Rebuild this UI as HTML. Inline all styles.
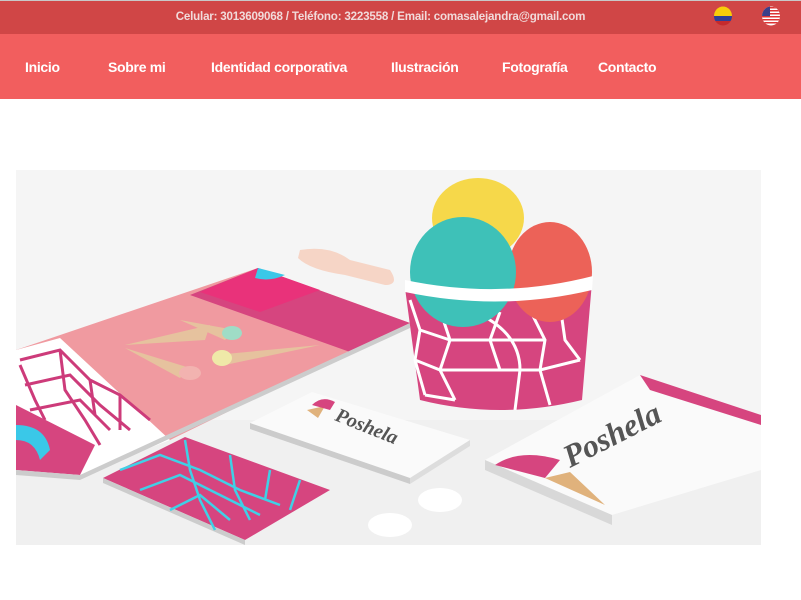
<!DOCTYPE html>
<html><head><meta charset="utf-8"><style>
*{margin:0;padding:0;box-sizing:border-box}
body{width:801px;height:600px;background:#fff;position:relative;overflow:hidden;font-family:"Liberation Sans",sans-serif;font-weight:bold;color:#fff}
.top{position:absolute;left:0;top:0;width:801px;height:34px;background:#d04646;border-top:1px solid #c8c8c8}
.top .t{position:absolute;left:164px;top:9px;width:433px;text-align:center;font-size:11.6px;letter-spacing:-0.2px;color:#f1dada;white-space:nowrap}
.nav{position:absolute;left:0;top:34px;width:801px;height:65px;background:#f25e5e}
.nav span{position:absolute;top:25px;font-size:14px;letter-spacing:-0.3px;white-space:nowrap}
</style></head><body>
<div class="top"><div class="t">Celular: 3013609068 / Teléfono: 3223558 / Email: comasalejandra@gmail.com</div>
<svg style="position:absolute;left:713px;top:5px" width="20" height="20" viewBox="0 0 20 20"><clipPath id="c1"><ellipse cx="10" cy="10" rx="9" ry="9.5"/></clipPath><g clip-path="url(#c1)"><rect width="20" height="10" fill="#f7cd0a"/><rect y="10" width="20" height="5" fill="#2f3f96"/><rect y="15" width="20" height="5" fill="#c52a2d"/></g></svg>
<svg style="position:absolute;left:761px;top:5px" width="20" height="20" viewBox="0 0 20 20"><clipPath id="c2"><ellipse cx="10" cy="10" rx="9" ry="9.5"/></clipPath><g clip-path="url(#c2)"><rect width="20" height="20" fill="#fff"/><g fill="#d33"><rect y="1" width="20" height="1.5"/><rect y="4" width="20" height="1.5"/><rect y="7" width="20" height="1.5"/><rect y="10" width="20" height="1.5"/><rect y="13" width="20" height="1.5"/><rect y="16" width="20" height="1.5"/></g><rect width="9" height="10" fill="#3b3f8a"/></g></svg>
</div>
<div class="nav">
<span style="left:25px">Inicio</span><span style="left:108px">Sobre mi</span><span style="left:211px">Identidad corporativa</span><span style="left:391px">Ilustración</span><span style="left:502px">Fotografía</span><span style="left:598px">Contacto</span>
</div>
<svg style="position:absolute;left:0;top:0" width="801" height="600" viewBox="0 0 801 600">
<defs><clipPath id="img"><rect x="16" y="170" width="745" height="375"/></clipPath></defs>
<g clip-path="url(#img)">
<rect x="16" y="170" width="745" height="375" fill="#f5f5f5"/>
<rect x="16" y="420" width="745" height="125" fill="#f0f0f0"/>
<path d="M300 250 Q330 245 350 260 L390 270 Q400 285 385 285 L345 275 Q310 270 298 258Z" fill="#f6d5c6"/>
<polygon points="16,350 258,268 410,323 170,440 16,470" fill="#f09aa0"/>
<polygon points="190,295 258,268 410,323 350,352" fill="#d6457f"/>
<polygon points="200,292 258,268 320,290 260,312" fill="#e9327a"/>
<path d="M258 268 L285 275 Q270 282 255 278Z" fill="#3ac8e8"/>
<polygon points="16,350 60,338 170,440 80,475 16,470" fill="#fff"/>
<g stroke="#cd3b7a" stroke-width="3" fill="none"><path d="M20 360 L60 350 L90 380 L120 395 L150 420 M25 385 L70 375 L100 405 L130 430 M30 410 L80 400 L110 430 M20 365 L35 400 L45 420 M60 350 L65 390 L85 420 L100 445 M90 380 L95 415 M120 395 L120 430"/></g>
<polygon points="16,405 95,445 80,475 16,470" fill="#d6457f"/>
<path d="M16 425 Q45 425 50 450 L40 460 Q35 440 16 440Z" fill="#3ac8e8"/>
<polygon points="16,470 80,475 410,323 410,328 80,480 16,475" fill="#ccc"/>
<path d="M125 345 L210 325 L205 340Z" fill="#e6c29e"/><path d="M180 320 L235 330 L225 340Z" fill="#e6c29e"/><ellipse cx="232" cy="333" rx="10" ry="7" fill="#9fdcc6"/>
<path d="M125 348 L190 368 L180 378Z" fill="#e6c29e"/><ellipse cx="190" cy="373" rx="11" ry="7" fill="#f2b3b0"/>
<path d="M215 355 L320 345 L225 365Z" fill="#e6c29e"/><ellipse cx="222" cy="358" rx="10" ry="8" fill="#efe9a8"/>
<polygon points="103,478 185,437 330,490 245,540" fill="#d6457f"/>
<polygon points="103,478 245,540 245,545 103,483" fill="#ccc"/>
<g stroke="#3fd0e6" stroke-width="2.5" fill="none"><path d="M120 470 L160 455 L200 470 L240 490 L280 505 M140 490 L180 475 L220 495 L260 515 M170 510 L200 495 L230 520 M185 440 L190 470 L200 500 L215 530 M230 455 L235 490 L250 520 M270 470 L265 500 M300 480 L290 510"/></g>
<polygon points="250,423 312,392 470,440 410,478" fill="#fafafa"/>
<polygon points="250,423 410,478 410,484 250,429" fill="#ccc"/><polygon points="410,478 470,440 470,446 410,484" fill="#ddd"/>
<path d="M307 410 L325 406 L318 418Z" fill="#e0b27c"/><path d="M312 405 Q322 395 335 402 L330 410Z" fill="#d6457f"/>
<text x="334" y="420" transform="rotate(22 334 420)" font-family="Liberation Serif,serif" font-style="italic" font-weight="bold" font-size="20" fill="#555">Poshela</text>
<polygon points="485,460 640,375 761,420 761,470 612,515" fill="#fafafa"/>
<polygon points="485,460 612,515 612,525 485,470" fill="#d8d8d8"/>
<polygon points="640,375 761,415 761,425 650,390" fill="#d6457f"/>
<path d="M495 465 Q520 448 560 460 L545 478Z" fill="#d6457f"/><path d="M545 478 L570 472 L605 505Z" fill="#e0b27c"/>
<text x="570" y="468" transform="rotate(-27 570 468)" font-family="Liberation Serif,serif" font-style="italic" font-weight="bold" font-size="32" fill="#555">Poshela</text>
<ellipse cx="440" cy="500" rx="22" ry="12" fill="#fff"/><ellipse cx="390" cy="525" rx="22" ry="12" fill="#fff"/>
<path d="M405 288 Q500 305 592 282 L582 400 Q500 420 420 400Z" fill="#d6457f"/>
<g stroke="#fff" stroke-width="3" fill="none"><path d="M410 300 L420 330 L415 360 L425 395 M440 310 L450 340 L440 370 L455 400 M470 310 Q520 330 520 370 L515 410 M500 312 L490 340 L500 370 M530 310 L545 340 L540 370 L550 405 M560 305 L565 340 L580 360 M420 330 L450 340 L490 340 L545 340 M415 360 L440 370 L500 370 L540 370 L580 360 M425 395 L455 400"/></g>
<ellipse cx="478" cy="218" rx="46" ry="40" fill="#f6d84a"/>
<ellipse cx="550" cy="272" rx="42" ry="50" fill="#ec6258"/>
<ellipse cx="463" cy="272" rx="53" ry="55" fill="#3ec1b8"/>
<path d="M405 280 Q500 300 593 276 L592 290 Q500 312 405 292Z" fill="#fff"/>
</g>
</svg>
</body></html>
